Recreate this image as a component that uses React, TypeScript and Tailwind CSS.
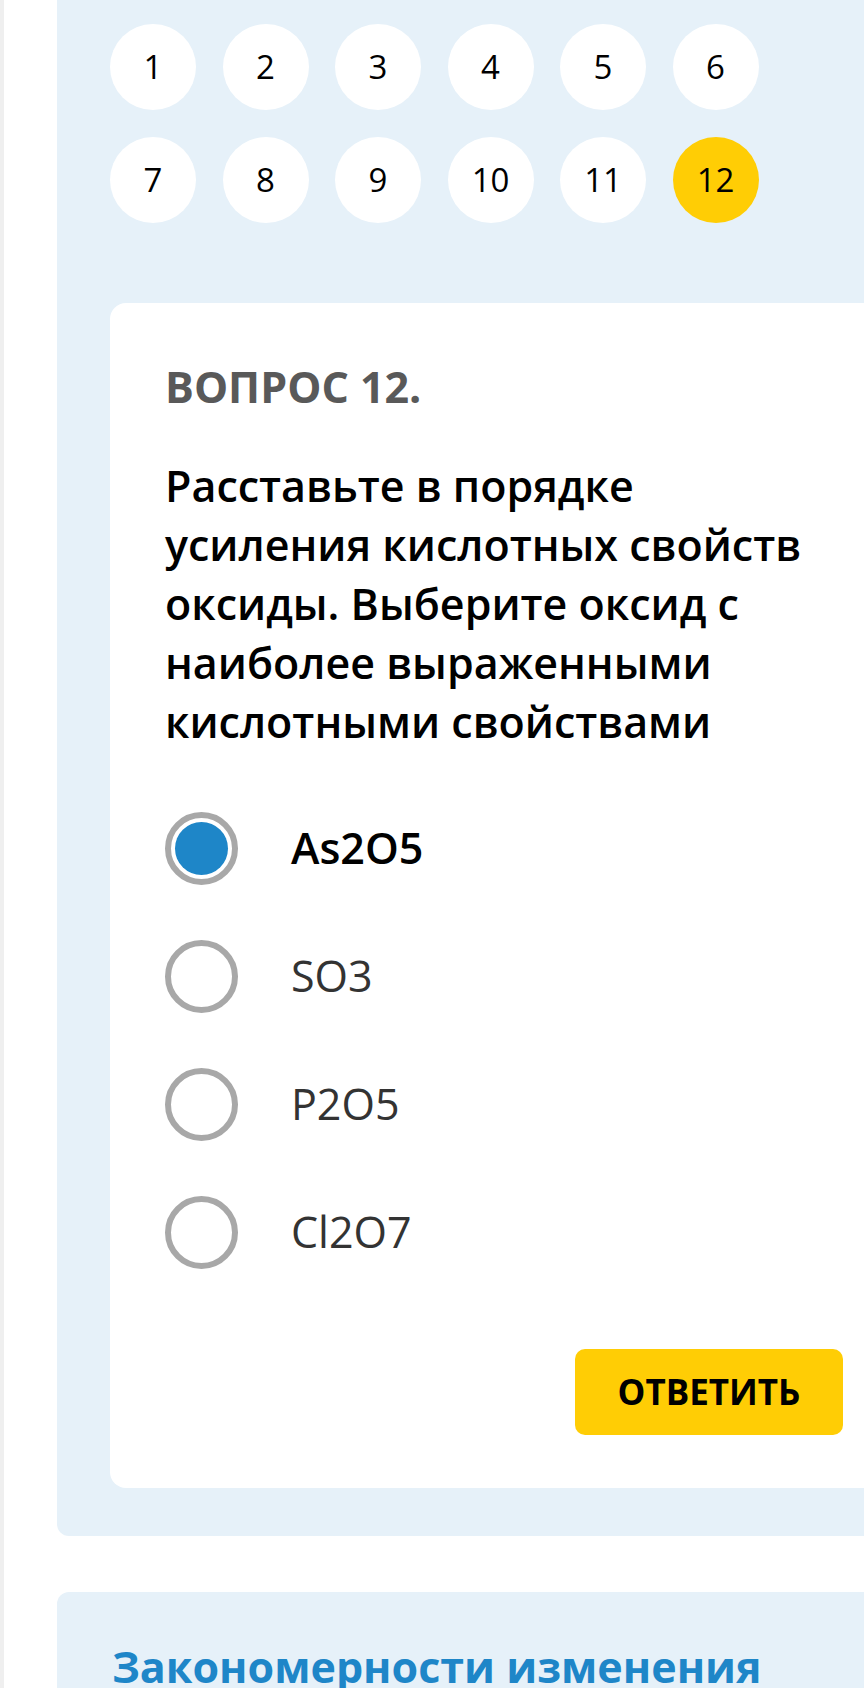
import React, { useState } from 'react';

const options = ['As2O5', 'SO3', 'P2O5', 'Cl2O7'];
const numbers = [1, 2, 3, 4, 5, 6, 7, 8, 9, 10, 11, 12];

export default function App() {
  const [selected, setSelected] = useState(0);
  const current = 12;

  return (
    <div className="flex h-[1688px] w-[864px] overflow-hidden bg-white font-['Open_Sans',sans-serif]">
      {/* left gutter */}
      <div className="w-[57px] shrink-0 border-l-4 border-[#efefef]" />

      <div className="flex w-[860px] shrink-0 flex-col">
        {/* quiz panel */}
        <div className="rounded-b-[12px] bg-[#e6f1f9] pb-[48px] pl-[53px] pt-[24px]">
          <div className="grid grid-cols-[repeat(6,86px)] gap-x-[26.5px] gap-y-[27px]">
            {numbers.map((n) => (
              <div
                key={n}
                className={`flex h-[86px] w-[86px] items-center justify-center rounded-full text-[33px] text-black ${
                  n === current ? 'bg-[#ffcd05]' : 'bg-white'
                }`}
              >
                {n}
              </div>
            ))}
          </div>

          <div className="mt-[80px] w-[780px] rounded-[16px] bg-white pb-[53px] pl-[55px] pr-[47px] pt-[54px]">
            <div className="text-[43px] font-bold leading-[59px] text-[#595959]">ВОПРОС 12.</div>
            <div className="mt-[40px] max-w-[665px] text-[43px] font-semibold leading-[59px] text-black">
              Расставьте в порядке усиления кислотных свойств оксиды. Выберите оксид с наиболее выраженными
              кислотными свойствами
            </div>

            <div className="mt-[33px] flex flex-col">
              {options.map((opt, i) => (
                <button
                  key={opt}
                  type="button"
                  onClick={() => setSelected(i)}
                  className="flex h-[128px] items-center gap-[53px] text-left"
                >
                  <span className="flex h-[73px] w-[73px] shrink-0 items-center justify-center rounded-full border-[6px] border-[#a8a8a8] bg-white">
                    {selected === i && <span className="h-[53px] w-[53px] rounded-full bg-[#1e86c8]" />}
                  </span>
                  <span
                    className={`text-[43px] ${
                      selected === i ? 'font-semibold text-black' : 'font-normal text-[#333333]'
                    }`}
                  >
                    {opt}
                  </span>
                </button>
              ))}
            </div>

            <div className="mt-[53px] flex justify-end">
              <button
                type="button"
                className="flex h-[86px] w-[268px] items-center justify-center rounded-[10px] bg-[#ffcd05] text-[35px] font-bold text-black"
              >
                ОТВЕТИТЬ
              </button>
            </div>
          </div>
        </div>

        {/* next topic panel */}
        <div className="mt-[56px] flex-1 rounded-t-[12px] bg-[#e6f1f9] pl-[55px] pt-[45px]">
          <div className="text-[43px] font-bold leading-[59px] text-[#1e86c8]">Закономерности изменения</div>
        </div>
      </div>
    </div>
  );
}
